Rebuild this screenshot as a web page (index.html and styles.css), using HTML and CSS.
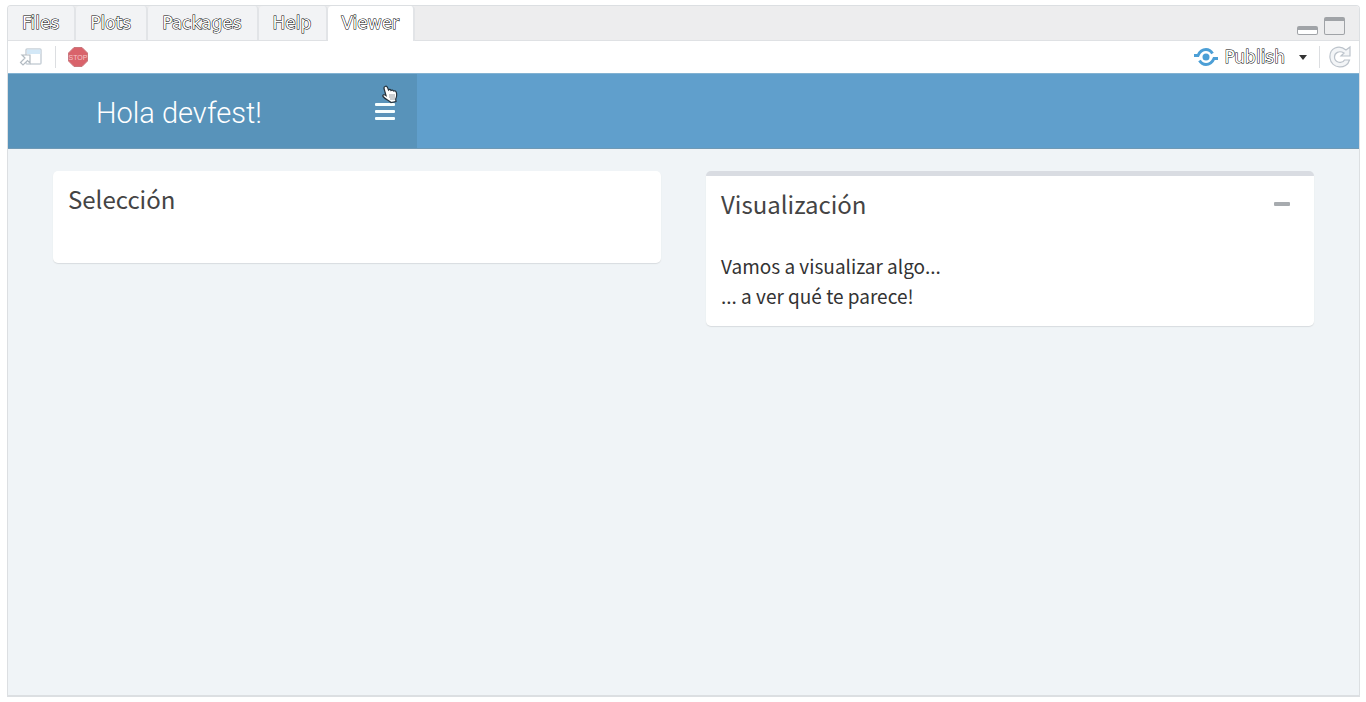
FILE: index.html
```html
<!DOCTYPE html>
<html lang="es">
<head>
<meta charset="utf-8">
<title>Hola devfest!</title>
<link rel="stylesheet" href="styles.css">
</head>
<body>
<main class="pane">
  <nav class="tabs" aria-label="Pane">
    <button class="tab">Files</button>
    <button class="tab">Plots</button>
    <button class="tab">Packages</button>
    <button class="tab">Help</button>
    <button class="tab active">Viewer</button>
    <div class="window-buttons">
      <button class="minimize" aria-label="Minimize"></button>
      <button class="maximize" aria-label="Maximize"></button>
    </div>
  </nav>
  <div class="toolbar">
    <button class="tool" aria-label="Show in new window">
      <svg width="24" height="20" viewBox="0 0 24 20">
        <rect x="7" y="2" width="15" height="15" rx="1" fill="#fff" stroke="#c9d1d8" stroke-width="1.5"/>
        <path d="M8 2.500h13.500V7H8z" fill="#d3e8f7"/>
        <path d="M3 8h8v8l-2.500-2.500L4 18l-2.500-2.500L6 11z" fill="#fff" stroke="#b3bbc2" stroke-width="1.2"/>
      </svg>
    </button>
    <span class="divider"></span>
    <button class="tool" aria-label="Stop">
      <svg width="20" height="20" viewBox="0 0 20 20">
        <path d="M6 .5h8L19.500 6v8L14 19.500H6L.5 14V6z" fill="#d9636b" stroke="#c9777c"/>
        <text x="10" y="13" class="stop-text">STOP</text>
      </svg>
    </button>
    <div class="tools-right">
      <button class="publish">
        <svg width="24" height="20" viewBox="0 0 24 20" fill="none" stroke="#4c9fd6" stroke-width="3">
          <path d="M0 8.500h4C6 4 9 2.500 12 2.500c3 0 5 1.500 6.500 4"/>
          <path d="M24 11.500h-4c-2 4.500-5 6-8 6-3 0-5-1.500-6.500-4"/>
          <circle cx="12" cy="10" r="3.500" fill="#4c9fd6" stroke="none"/>
        </svg>
        <span class="outlined">Publish</span>
        <svg class="caret" width="8" height="5" viewBox="0 0 8 5"><path d="M0 0h8L4 5z" fill="#333"/></svg>
      </button>
      <span class="divider"></span>
      <button class="tool" aria-label="Refresh">
        <svg width="24" height="24" viewBox="0 0 24 24">
          <path d="M18 5l4-3v9h-9l3-3C11 5 6.500 8 6.500 12c0 6 8 7 10 3h5C19 25 3 24 2 13 1 3 11-1 18 5z" fill="#f3f5f7" stroke="#bcc3cb" stroke-width="1.2"/>
        </svg>
      </button>
    </div>
  </div>
  <header class="header">
    <div class="brand">
      <h1>Hola devfest!</h1>
      <button class="menu" aria-label="Toggle navigation"><i></i><i></i><i></i></button>
      <svg class="pointer" width="18" height="19" viewBox="0 0 18 19">
        <path d="M4 1.500c1.500-1 2.500 0 3.500 3.500 1-1 2-.8 2.500.5 1-.8 2-.5 2.500.5 1.500-.6 2.500 0 3 2 .4 2.500 0 4.500-.8 6l.3 2.500-5 1c-2-2-5.500-3-8-6-.8-1.500 1-2.500 3-1L3 3.500c-.2-1 .2-1.600 1-2z" fill="#fff" stroke="#26323b" stroke-width="1.200"/>
        <path d="M8 10h6M8 12h6M9 14h5" stroke="#9a9fa3"/>
      </svg>
    </div>
  </header>
  <div class="content">
    <section class="box">
      <h2>Selección</h2>
    </section>
    <section class="box topped">
      <div class="box-header">
        <h2>Visualización</h2>
        <button class="collapse" aria-label="Collapse"></button>
      </div>
      <p>Vamos a visualizar algo...<br>... a ver qué te parece!</p>
    </section>
  </div>
</main>
</body>
</html>
```

FILE: styles.css
```css
* { box-sizing: border-box; }
body {
  margin: 0;
  padding: 5px 6px 5px 7px;
  height: 100vh;
  background: #fff;
  font-family: "Noto Sans CJK SC", "Noto Sans", sans-serif;
}
button { border: 0; padding: 0; background: none; font: inherit; }
svg { display: block; }
h1, h2, p { margin: 0; }
.pane {
  display: flex;
  flex-direction: column;
  height: 100%;
  border: 1px solid #dcdfe2;
  border-bottom-width: 2px;
  border-radius: 4px 4px 0 0;
  overflow: hidden;
}
.tabs {
  display: flex;
  height: 35px;
  background: #ededee;
  border-bottom: 1px solid #dfe1e4;
}
.tab, .outlined {
  font-family: "DejaVu Sans", sans-serif;
  font-size: 17px;
  color: #fff;
  -webkit-text-stroke: 1px #000;
  paint-order: stroke fill;
}
.tab {
  padding: 0 15px 1px 14px;
  border-right: 2px solid #e2e4e7;
  border-radius: 4px 4px 0 0;
  background: #f2f3f5;
}
.active { background: #fff; margin-bottom: -1px; padding: 0 14px 2px 13px; }
.window-buttons {
  display: flex;
  align-items: flex-end;
  gap: 6px;
  margin-left: auto;
  padding: 0 14px 5px 0;
}
.minimize, .maximize {
  width: 21px;
  border: 1px solid #a0a3a7;
  border-top-width: 4px;
  border-radius: 2px;
  background: #fff;
}
.minimize { height: 9px; }
.maximize { height: 18px; background: #ededee; }
.toolbar {
  display: flex;
  align-items: center;
  gap: 12px;
  height: 32px;
  padding: 0 7px 0 11px;
}
.divider { width: 1px; height: 22px; background: #dcdee1; }
.stop-text {
  font: 7px "Liberation Sans", sans-serif;
  fill: #f5c5c8;
  text-anchor: middle;
}
.tools-right { display: flex; align-items: center; gap: 8px; margin-left: auto; }
.publish { display: flex; align-items: center; gap: 6px; padding-right: 4px; }
.caret { margin-left: 8px; }
.header {
  height: 76px;
  background: #609fcc;
  border-top: 1px solid #82b2d2;
  border-bottom: 1px solid #6f99b5;
}
.brand {
  position: relative;
  display: flex;
  align-items: center;
  justify-content: space-between;
  width: 409px;
  height: 100%;
  padding: 0 22px 0 88px;
  background: #5893ba;
}
h1 { padding-top: 4px; color: #fff; font: 300 29px/34px "Roboto", "Liberation Sans", sans-serif; }
.menu { display: flex; flex-direction: column; gap: 4px; width: 20px; }
.menu i { height: 3px; border-radius: 1px; background: #f5feff; }
.pointer { position: absolute; left: 373px; top: 11px; }
.content {
  flex: 1;
  display: grid;
  grid-template-columns: 1fr 1fr;
  align-items: start;
  gap: 45px;
  padding: 22px 45px;
  background: #f0f4f7;
}
.box {
  min-height: 92px;
  padding: 13px 15px 15px;
  background: #fff;
  border-radius: 5px;
  box-shadow: 0 1px 1px #d8dcdf;
}
.topped { border-top: 5px solid #d9dce2; }
h2 { color: #444; font-size: 24px; line-height: 30px; font-weight: 400; }
.box-header { display: flex; align-items: center; justify-content: space-between; margin-bottom: 32px; }
.collapse { width: 16px; height: 4px; margin-right: 9px; border-radius: 1px; background: #a7abaf; }
p { color: #333; font-size: 19px; line-height: 30px; }
```
